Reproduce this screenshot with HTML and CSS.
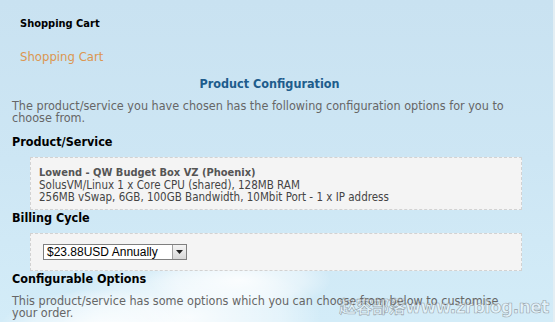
FILE: index.html
```html
<!DOCTYPE html>
<html lang="en">

<head>
  <meta charset="UTF-8" />
  <title>Shopping Cart - Product Configuration</title>
  <link rel="stylesheet" href="styles.css">
</head>

<body>
  <div class="sky">
    <div class="cloud cloud-a"></div>
    <div class="cloud cloud-b"></div>
    <div class="cloud cloud-c"></div>

    <div class="page">
      <div class="crumb">Shopping Cart</div>
      <div class="cart-title">Shopping Cart</div>

      <div class="content">
        <h2>Product Configuration</h2>
        <p class="intro">The product/service you have chosen has the following configuration options for you to choose from.</p>

        <h3>Product/Service</h3>
        <div class="box">
          <strong>Lowend - QW Budget Box VZ (Phoenix)</strong><br>
          SolusVM/Linux 1 x Core CPU (shared), 128MB RAM<br>
          256MB vSwap, 6GB, 100GB Bandwidth, 10Mbit Port - 1 x IP address
        </div>

        <h3 class="flush">Billing Cycle</h3>
        <div class="box box-billing">
          <div class="select">
            <span class="select-value">$23.88USD Annually</span>
            <span class="select-arrow">
              <svg width="7" height="4" viewBox="0 0 7 4"><path d="M0 0h7L3.5 4z" fill="#222"/></svg>
            </span>
          </div>
        </div>

        <h3 class="flush">Configurable Options</h3>
        <p class="intro intro-options">This product/service has some options which you can choose from below to customise your order.</p>
      </div>
    </div>

    <div class="watermark">赵容部落www.zrblog.net</div>
  </div>
</body>

</html>
```

FILE: styles.css
```css
/* Base */
* {
  box-sizing: border-box;
  margin: 0;
  padding: 0;
}

body {
  width: 555px;
  height: 322px;
  overflow: hidden;
  font-family: 'DejaVu Sans Condensed', 'DejaVu Sans', Tahoma, sans-serif;
  color: #000;
}

/* Sky background */
.sky {
  position: relative;
  width: 555px;
  height: 322px;
  overflow: hidden;
  background: linear-gradient(180deg, #c9e2f1 0%, #cde6f4 50%, #d3ecf8 100%);
  border-right: 2px solid #e4eef3;
}

.cloud {
  position: absolute;
  border-radius: 50%;
  background: radial-gradient(ellipse at center, rgba(255, 255, 255, 0.85) 0%, rgba(255, 255, 255, 0.4) 50%, rgba(255, 255, 255, 0) 72%);
}

.cloud-a {
  left: 60px;
  top: 262px;
  width: 260px;
  height: 110px;
}

.cloud-b {
  left: 150px;
  top: 250px;
  width: 180px;
  height: 60px;
}

.cloud-c {
  left: 0;
  top: 290px;
  width: 200px;
  height: 80px;
}

.page {
  position: relative;
}

/* Header */
.crumb {
  padding: 17px 0 0 20px;
  font-size: 11px;
  font-weight: bold;
  line-height: 13px;
}

.cart-title {
  padding: 19px 0 0 20px;
  font-size: 13px;
  line-height: 16px;
  color: #dc9650;
}

/* Content */
.content {
  width: 527px;
  padding-left: 12px;
  padding-top: 11px;
}

h2 {
  font-size: 12.5px;
  line-height: 16px;
  font-weight: bold;
  color: #1d5c8c;
  text-align: center;
}

.intro {
  margin-top: 8px;
  font-size: 12.5px;
  line-height: 12px;
  color: #666;
}

.intro-options {
  margin-top: 9px;
}

h3 {
  margin-top: 10px;
  font-size: 12.5px;
  line-height: 15px;
  font-weight: bold;
}

h3.flush {
  margin-top: 0;
}

.box {
  margin: 8px 0 0 18px;
  width: 492px;
  padding: 8px 8px 6px;
  border: 1px dashed #d2d2d2;
  background-color: #f4f4f4;
  font-size: 11.5px;
  line-height: 12px;
  color: #444;
}

.box strong {
  font-size: 11px;
  color: #555;
}

.box-billing {
  padding: 10px 12px 10px;
}

/* Select */
.select {
  display: flex;
  width: 144px;
  height: 16px;
  border: 1px solid #7f7f7f;
  background-color: #fff;
  font-family: 'Liberation Sans', Arial, sans-serif;
  font-size: 12px;
  line-height: 14px;
}

.select-value {
  flex: 1;
  padding-left: 3px;
  color: #000;
}

.select-arrow {
  width: 14px;
  height: 14px;
  display: flex;
  align-items: center;
  justify-content: center;
  background: linear-gradient(180deg, #f4f4f4 0%, #d8d8d8 100%);
  border-left: 1px solid #a0a0a0;
}

/* Watermark */
.watermark {
  position: absolute;
  right: 4px;
  bottom: 4px;
  font-family: 'DejaVu Sans', 'Noto Sans CJK SC', sans-serif;
  font-size: 17px;
  font-weight: bold;
  color: rgba(255, 255, 255, 0.35);
  -webkit-text-stroke: 0.6px rgba(90, 90, 90, 0.55);
  letter-spacing: -0.5px;
}
```
